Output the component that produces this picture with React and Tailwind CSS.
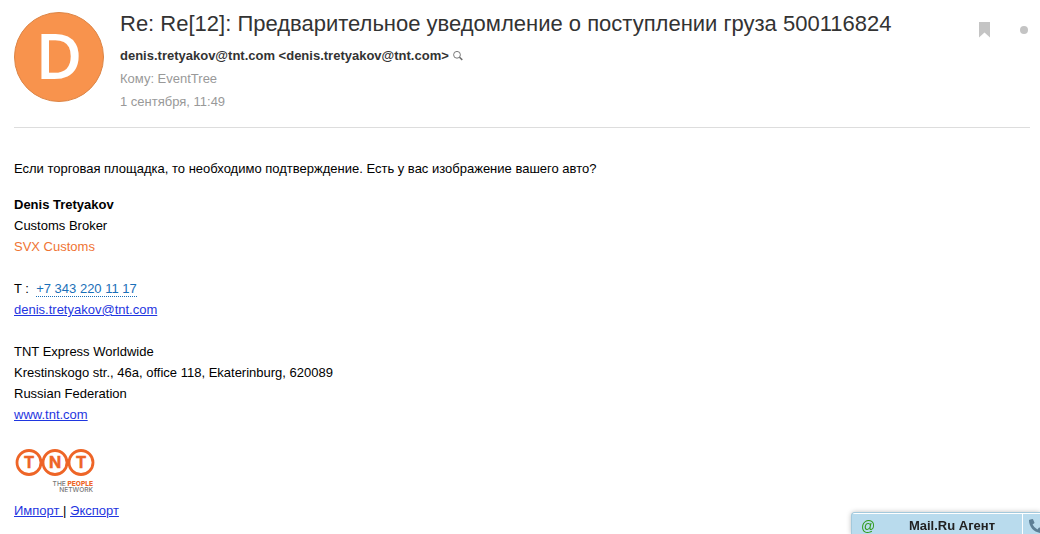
import { FaPhoneAlt } from 'react-icons/fa'

function SearchIcon() {
  return (
    <svg width="10" height="10" viewBox="0 0 10 10" fill="none" stroke="#6b6b6b" aria-hidden="true">
      <circle cx="4" cy="3.8" r="3.4" strokeWidth="0.9" />
      <path d="M6.5 6.3 L9.3 8.9" strokeWidth="1.5" />
    </svg>
  )
}

function TntLogo() {
  const letters = [
    { char: 'T', x: 15 },
    { char: 'N', x: 41 },
    { char: 'T', x: 67 },
  ]

  return (
    <svg width="82" height="48" viewBox="0 0 82 48" role="img" aria-label="TNT The People Network">
      {letters.map(({ char, x }) => (
        <g key={x}>
          <circle cx={x} cy="16.5" r="12" fill="#ffffff" stroke="#ee6527" strokeWidth="2.8" />
          <text
            x={x}
            y="22.2"
            textAnchor="middle"
            fontSize="16"
            fill="#ee6527"
            stroke="#ee6527"
            strokeWidth="0.4"
            className="font-['Inter',sans-serif] font-bold"
          >
            {char}
          </text>
        </g>
      ))}
      <g fontSize="6.6" textAnchor="end" className="font-['Inter',sans-serif] font-medium">
        <text x="79" y="40" fill="#777777">
          THE <tspan fill="#ee6527" className="font-extrabold">PEOPLE</tspan>
        </text>
        <text x="79" y="46" fill="#777777">NETWORK</text>
      </g>
    </svg>
  )
}

function MessageHeader() {
  return (
    <header className="flex items-start gap-4 border-b border-[#dddddd] pb-3.5">
      <div className="flex size-[90px] shrink-0 items-center justify-center rounded-full border border-[#dc8546] bg-[#f8934d] pb-1 font-['Open_Sans',sans-serif] text-[64px] leading-none font-semibold text-white">
        D
      </div>

      <div className="min-w-0 flex-1">
        <h1 className="text-[22px] leading-6 text-[#333333]">
          Re: Re[12]: Предварительное уведомление о поступлении груза 500116824
        </h1>
        <div className="mt-2 flex items-center gap-1 text-[13px] leading-[23px] font-bold text-[#333333]">
          <span>denis.tretyakov@tnt.com &lt;denis.tretyakov@tnt.com&gt;</span>
          <button type="button" aria-label="Найти письма">
            <SearchIcon />
          </button>
        </div>
        <p className="text-[13px] leading-[23px] text-[#999999]">Кому: EventTree</p>
        <p className="text-[13px] leading-[23px] text-[#999999]">1 сентября, 11:49</p>
      </div>

      <div className="flex items-center gap-[30px] pt-2.5">
        <button type="button" aria-label="Флажок">
          <svg className="block" width="11" height="16" viewBox="0 0 11 16" fill="#c4c4c4">
            <path d="M0 0 H11 V15.5 L5.5 10.5 L0 15.5 Z" />
          </svg>
        </button>
        <button type="button" aria-label="Непрочитанное" className="mr-0.5 size-2 rounded-full bg-[#c4c4c4]" />
      </div>
    </header>
  )
}

function Signature() {
  const link = 'text-[#1f36e0] underline'

  return (
    <div className="mt-[15px]">
      <p className="font-bold">Denis Tretyakov</p>
      <p>Customs Broker</p>
      <p className="text-[#ef7433]">SVX Customs</p>

      <p className="mt-[21px]">
        T :&nbsp;{' '}
        <a href="tel:+73432201117" className="border-b border-dotted border-[#1a6fb8] text-[#1a6fb8]">
          +7 343 220 11 17
        </a>
      </p>
      <p>
        <a href="mailto:denis.tretyakov@tnt.com" className={link}>denis.tretyakov@tnt.com</a>
      </p>

      <p className="mt-[21px]">TNT Express Worldwide</p>
      <p>Krestinskogo str., 46a, office 118, Ekaterinburg, 620089</p>
      <p>Russian Federation</p>
      <p>
        <a href="http://www.tnt.com" className={link}>www.tnt.com</a>
      </p>

      <div className="mt-[21px] mb-1.5">
        <TntLogo />
      </div>
      <p>
        <a href="#import" className={link}>Импорт </a>
        {'| '}
        <a href="#export" className={link}>Экспорт</a>
      </p>
    </div>
  )
}

function AgentBar() {
  return (
    <div className="fixed right-0 bottom-0 flex h-[22px] w-[189px] overflow-hidden rounded-tl border-t border-l border-[#a3c9dc] bg-[#b9dbed] shadow-[0_0_5px_rgba(0,0,0,0.25)]">
      <button type="button" className="flex flex-1 items-center border-t border-white pt-1 pl-2">
        <span className="w-4 text-[14px] leading-4 text-[#2f9a18]">@</span>
        <span className="flex-1 pl-1.5 text-center text-[13px] leading-4 font-bold text-[#222222]">Mail.Ru Агент</span>
      </button>
      <button
        type="button"
        aria-label="Позвонить"
        className="w-[18px] shrink-0 overflow-hidden border-t border-l border-white pt-1 pl-1.5 text-[#5d7f96]"
      >
        <FaPhoneAlt size={14} className="max-w-none -scale-x-100 rotate-90" />
      </button>
    </div>
  )
}

function App() {
  return (
    <div className="bg-white pt-3 pr-2.5 pb-3 pl-3.5 font-['Liberation_Sans',Arial,sans-serif]">
      <MessageHeader />
      <main className="pt-[30px] text-[13px] leading-[21px] text-black">
        <p>Если торговая площадка, то необходимо подтверждение. Есть у вас изображение вашего авто?</p>
        <Signature />
      </main>
      <AgentBar />
    </div>
  )
}

export default App
